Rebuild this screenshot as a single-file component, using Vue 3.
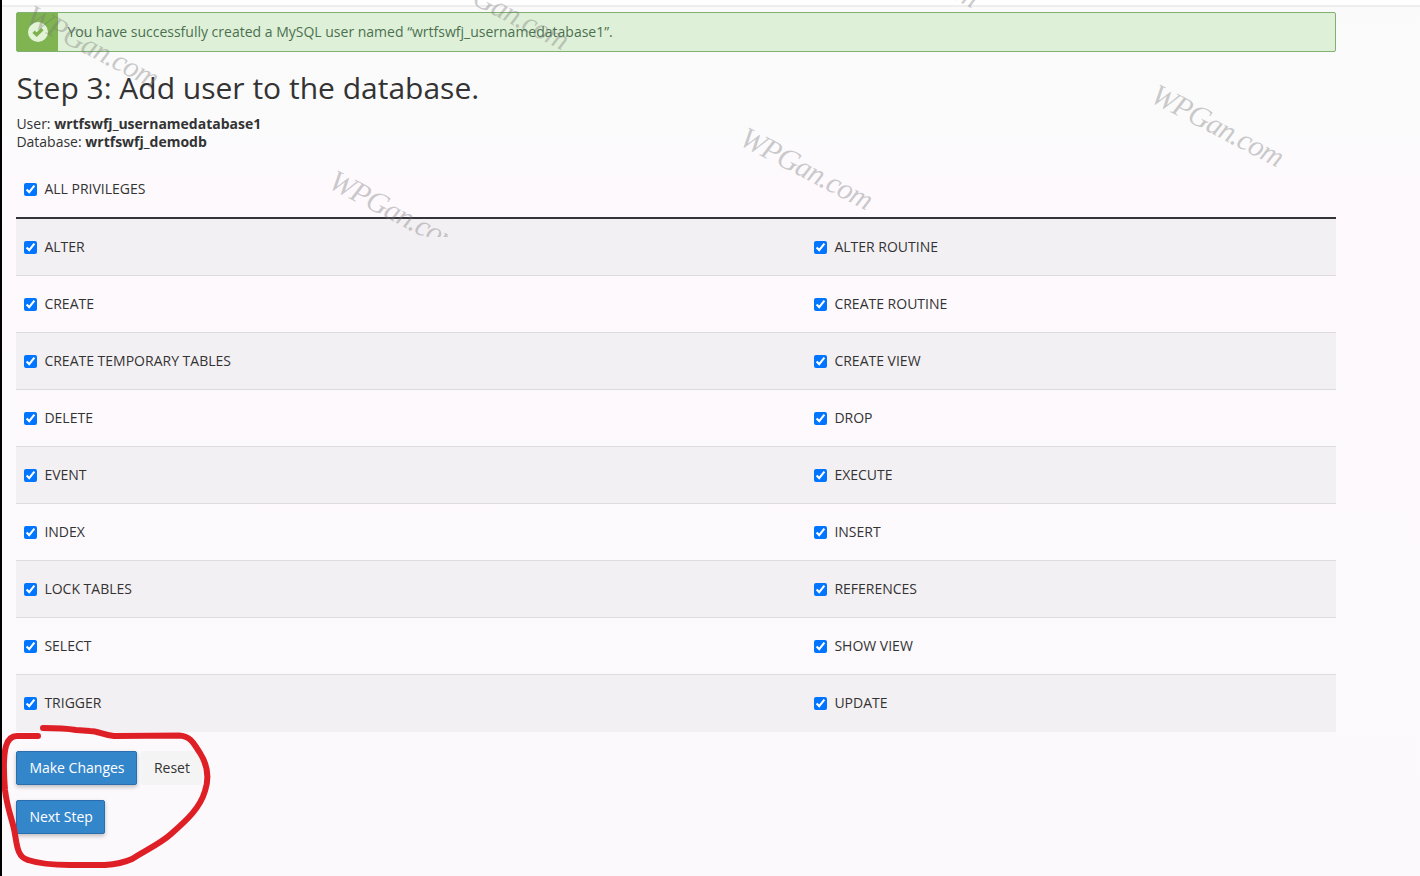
<script setup>
import { ref } from "vue";

const user = "wrtfswfj_usernamedatabase1";
const database = "wrtfswfj_demodb";

const PRIVILEGES = [
	["ALTER", "ALTER ROUTINE"],
	["CREATE", "CREATE ROUTINE"],
	["CREATE TEMPORARY TABLES", "CREATE VIEW"],
	["DELETE", "DROP"],
	["EVENT", "EXECUTE"],
	["INDEX", "INSERT"],
	["LOCK TABLES", "REFERENCES"],
	["SELECT", "SHOW VIEW"],
	["TRIGGER", "UPDATE"],
];

const names = PRIVILEGES.flat();
const allChecked = ref(true);
const checked = ref([...names]);

// baseline start of each stamp
const STAMPS = [
	{ x: 24, y: 22 },
	{ x: 434, y: -16 },
	{ x: 844, y: -58 },
	{ x: 738, y: 144 },
	{ x: 1149, y: 101 },
];

function toggleAll() {
	checked.value = allChecked.value ? [...names] : [];
}

function toggleOne() {
	allChecked.value = checked.value.length === names.length;
}

function reset() {
	allChecked.value = true;
	toggleAll();
}
</script>

<template>
	<main class="page">
		<div class="topbar"></div>
		<div class="content">
			<div class="alert">
				<div class="alert-icon">
					<svg width="20" height="20" viewBox="0 0 20 20">
						<circle cx="10" cy="10" r="10" fill="#e2f3d8" />
						<path d="M5.6 9.8 L8.7 12.7 L14.4 7" fill="none" stroke="#7fb04f" stroke-width="3.4" />
					</svg>
				</div>
				<div class="alert-text">You have successfully created a MySQL user named “{{ user }}”.</div>
			</div>

			<h1>Step 3: Add user to the database.</h1>
			<p class="info">
				User: <strong>{{ user }}</strong><br>
				Database: <strong>{{ database }}</strong>
			</p>

			<table class="privileges">
				<thead>
					<tr>
						<th colspan="2">
							<label><input v-model="allChecked" type="checkbox" @change="toggleAll">ALL PRIVILEGES</label>
						</th>
					</tr>
				</thead>
				<tbody>
					<tr v-for="(row, rowIndex) in PRIVILEGES" :key="rowIndex">
						<td v-for="name in row" :key="name">
							<label><input v-model="checked" type="checkbox" :value="name" @change="toggleOne">{{ name }}</label>
						</td>
					</tr>
				</tbody>
			</table>

			<div class="buttons">
				<button class="btn btn-primary">Make Changes</button>
				<button class="btn btn-link" @click="reset">Reset</button>
			</div>
			<div class="buttons">
				<button class="btn btn-primary">Next Step</button>
			</div>
		</div>

		<svg class="overlay" width="1420" height="876" viewBox="0 0 1420 876">
			<defs>
				<clipPath id="stamp-clip">
					<rect x="300" y="150" width="148" height="87" />
				</clipPath>
			</defs>
			<g class="stamp">
				<text
					v-for="(s, i) in STAMPS"
					:key="i"
					:transform="`translate(${s.x} ${s.y}) rotate(27.5)`"
					textLength="145"
				>WPGan.com</text>
				<g clip-path="url(#stamp-clip)">
					<text transform="translate(327 187) rotate(27.5)" textLength="145">WPGan.com</text>
				</g>
			</g>
			<path
				class="marker"
				d="M38 736 L17 736 Q9 736 6 746 C3 757 4 778 5 790 C7 807 11 816 14 829 C17 842 16 857 28 860 C40 864 55 865 70 865 L105 865 Q121 864 132 859 C144 851 160 844 171 834 C187 820 200 808 205 791 C210 776 207 764 200 753 C194 744 191 736 179 735.500 L114 736 C103 735 98 731 90 731 L76 730 C64 728 54 728 43 728"
			/>
		</svg>
	</main>
</template>

<style>
body {
	margin: 0;
	overflow: hidden;
}
</style>

<style scoped>
.page {
	position: relative;
	box-sizing: border-box;
	height: 876px;
	border-left: 2px solid #000;
	background: linear-gradient(#fafafa, #fbfbfc 130px, #fdf9fd 180px, #fcf9fc);
	color: #333;
	font-family: "Open Sans", sans-serif;
	font-size: 14px;
	line-height: 18px;
	overflow: hidden;
}

.topbar {
	height: 5px;
	background-color: #fff;
	border-bottom: 2px solid #eee;
}

.content {
	width: 1320px;
	margin-left: 14.4px;
	padding-top: 5px;
}

.alert {
	display: flex;
	box-sizing: border-box;
	height: 40px;
	border: 1px solid #82b070;
	border-radius: 2px;
	background-color: #dff0d8;
}

.alert-icon {
	display: flex;
	align-items: center;
	justify-content: center;
	width: 41px;
	background-color: #7fb450;
}

.alert-text {
	padding: 10px 9px;
	color: #4b7050;
}

h1 {
	margin: 17px 0 0;
	font-size: 30px;
	font-weight: 400;
	line-height: 38px;
}

.info {
	margin: 8px 0 9px;
}

.privileges {
	width: 100%;
	border-collapse: separate;
	border-spacing: 0;
}

.privileges th {
	height: 57px;
	padding: 0 8px;
	border-bottom: 2px solid #35323a;
	font-weight: 400;
	text-align: left;
}

.privileges td {
	box-sizing: border-box;
	height: 57px;
	padding: 0 8px;
	border-bottom: 1px solid #dddbdf;
}

.privileges td:first-child {
	width: 790px;
}

.privileges td:last-child {
	width: 530px;
}

.privileges tbody tr:nth-child(odd) {
	background-color: #f3f0f3;
}

.privileges tbody tr:last-child td {
	border-bottom-color: transparent;
}

label {
	display: flex;
	align-items: center;
}

input {
	width: 13px;
	height: 13px;
	margin: 1px 7px 0 0;
}

.buttons {
	display: flex;
	margin-top: 19px;
}

.buttons + .buttons {
	margin-top: 15px;
}

.btn {
	box-sizing: border-box;
	height: 34px;
	padding: 0 11.4px 0 12px;
	border: 1px solid transparent;
	border-radius: 2px;
	font: inherit;
}

.btn-primary {
	border-color: #2a6ead;
	background-color: #3486cb;
	box-shadow: 0 2px 4px rgba(0, 0, 0, 0.25);
	color: #fff;
}

.btn-link {
	margin-left: 4px;
	background-color: #f5f4f4;
	color: #333;
}

.overlay {
	position: absolute;
	top: 0;
	left: -2px;
	pointer-events: none;
}

.stamp {
	fill: #777;
	fill-opacity: 0.38;
	font-family: "Liberation Serif", serif;
	font-size: 30px;
	font-style: italic;
}

.marker {
	fill: none;
	stroke: #df1f26;
	stroke-width: 6;
	stroke-linecap: round;
	stroke-linejoin: round;
}
</style>
